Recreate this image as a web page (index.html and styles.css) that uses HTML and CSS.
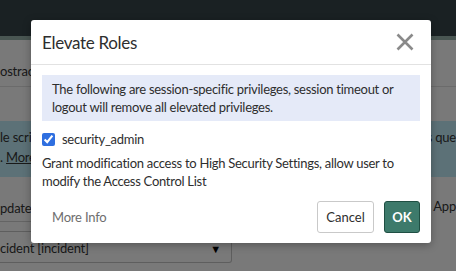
FILE: index.html
```html
<!DOCTYPE html>
<html lang="en">
<head>
<meta charset="UTF-8">
<meta name="viewport" content="width=device-width, initial-scale=1.0">
<title>Elevate Roles</title>
<link rel="stylesheet" href="styles.css">
</head>
<body>
<div class="page">
  <div class="topbar"></div>
  <div class="subbar"></div>
  <div class="title-row">ostract</div>
  <div class="spacer"></div>
  <div class="notice">
    <div class="notice-line"><span>le scri</span><span>s que</span></div>
    <div class="notice-line"><span>. <a href="#">More</a></span></div>
  </div>
  <div class="form-row">
    <div class="field-label">pdate</div>
    <div class="field-label-right">App</div>
  </div>
  <div class="select">cident [incident]<span class="caret">&#9660;</span></div>
</div>

<div class="backdrop">
  <div class="modal">
    <div class="modal-header">
      <h2>Elevate Roles</h2>
      <button class="close" aria-label="Close">
        <svg width="18" height="18" viewBox="0 0 18 18"><path d="M1.5 1.5 L16.5 16.5 M16.5 1.5 L1.5 16.5" stroke="#8a8a8a" stroke-width="2.6" fill="none"/></svg>
      </button>
    </div>
    <div class="modal-body">
      <div class="info">The following are session-specific privileges, session timeout or logout will remove all elevated privileges.</div>
      <label class="role"><input type="checkbox" checked> security_admin</label>
      <p class="desc">Grant modification access to High Security Settings, allow user to modify the Access Control List</p>
    </div>
    <div class="modal-footer">
      <a href="#" class="more">More Info</a>
      <div class="actions">
        <button class="btn btn-cancel">Cancel</button>
        <button class="btn btn-ok">OK</button>
      </div>
    </div>
  </div>
</div>
</body>
</html>
```

FILE: styles.css
```css
body {
  margin: 0;
  font-family: Lato, 'Open Sans', Arial, sans-serif;
  color: #2e2e2e;
  width: 456px;
  height: 271px;
  overflow: hidden;
  position: relative;
}

/* page behind the dialog */
.page {
  background-color: #f2f2f2;
  height: 271px;
  font-size: 13px;
  letter-spacing: -0.2px;
  color: #333;
}

.topbar {
  height: 36px;
  background-color: #354347;
}

.subbar {
  height: 4px;
  background-color: #93ada5;
}

.title-row {
  height: 47px;
  box-sizing: border-box;
  padding-top: 22px;
  line-height: 18px;
  border-bottom: 1px solid #d6d6d6;
}

.spacer {
  height: 34px;
}

.notice {
  background-color: #b8e3ee;
  height: 56px;
  padding-top: 6px;
  box-sizing: border-box;
}

.notice-line {
  display: flex;
  justify-content: space-between;
  line-height: 20px;
}

.notice-line a {
  color: #333;
}

.form-row {
  display: flex;
  align-items: flex-end;
}

.field-label {
  flex: 0 0 300px;
  height: 45px;
  box-sizing: border-box;
  padding-bottom: 3px;
  line-height: 20px;
  display: flex;
  align-items: flex-end;
  border-bottom: 1px solid #c8c8c8;
}

.field-label-right {
  margin-left: auto;
  padding-bottom: 6px;
  line-height: 20px;
  white-space: nowrap;
}

.select {
  width: 232px;
  height: 32px;
  margin-top: 9px;
  box-sizing: border-box;
  border: 1px solid #bcbcbc;
  border-left: none;
  border-radius: 0 3px 3px 0;
  display: flex;
  align-items: center;
  justify-content: space-between;
  padding-right: 10px;
  padding-top: 2px;
}

.caret {
  font-size: 11px;
  color: #000;
}

/* dialog */
.backdrop {
  position: absolute;
  inset: 0;
  background-color: rgba(0, 0, 0, 0.5);
}

.modal {
  position: absolute;
  left: 31px;
  top: 20px;
  width: 400px;
  height: 223px;
  background: #fff;
  border-radius: 3px;
  box-shadow: 0 2px 8px rgba(0, 0, 0, 0.3);
  display: flex;
  flex-direction: column;
}

.modal-header {
  height: 44px;
  border-bottom: 1px solid #e2e2e2;
  display: flex;
  align-items: center;
  justify-content: space-between;
  padding: 0 17px 0 11px;
}

.modal-header h2 {
  margin: 0;
  font-size: 17px;
  letter-spacing: -0.3px;
  font-weight: normal;
  color: #2e2e2e;
}

.close {
  background: none;
  border: none;
  padding: 0;
  display: flex;
}

.modal-body {
  padding: 10px 11px 0 11px;
  letter-spacing: -0.28px;
}

.info {
  background-color: #e5eaf8;
  padding: 5px 8px 5px 10px;
  font-size: 13px;
  line-height: 18px;
  color: #2e2e2e;
}

.role {
  display: flex;
  align-items: center;
  gap: 7px;
  margin-top: 12px;
  font-size: 13px;
  line-height: 13px;
}

.role input {
  margin: 0;
  width: 13px;
  height: 13px;
  accent-color: #2f6fe0;
}

.desc {
  margin: 8px 0 0;
  font-size: 13px;
  line-height: 18px;
}

.modal-footer {
  margin-top: auto;
  padding: 0 11px 10px 21px;
  display: flex;
  align-items: center;
  justify-content: space-between;
}

.more {
  color: #6e6e6e;
  text-decoration: none;
  font-size: 13px;
  letter-spacing: -0.2px;
}

.actions {
  display: flex;
  gap: 10px;
}

.btn {
  font-family: inherit;
  font-size: 13px;
  height: 32px;
  border-radius: 3px;
  cursor: pointer;
}

.btn-cancel {
  background: #fff;
  border: 1px solid #c9c9c9;
  color: #2e2e2e;
  width: 57px;
}

.btn-ok {
  background-color: #3d7a6b;
  border: 1px solid #1f4f43;
  color: #fff;
  width: 36px;
  font-weight: bold;
}
```
